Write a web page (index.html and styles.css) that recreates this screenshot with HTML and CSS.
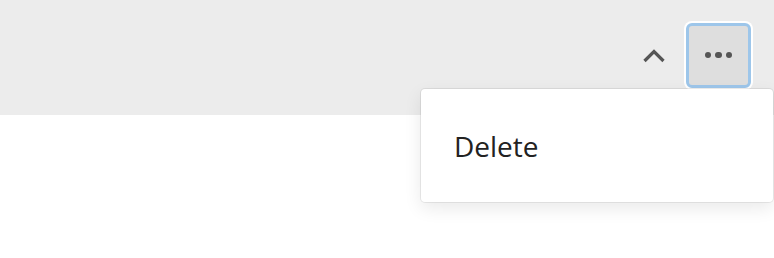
FILE: index.html
```html
<!DOCTYPE html>
<html>
<head>
<meta charset="utf-8">
<link rel="stylesheet" href="styles.css">
</head>
<body>
<div class="toolbar">
  <button class="icon-btn chevron" aria-label="Collapse">
    <svg width="24" height="16" viewBox="0 0 24 16"><path d="M2.5 13 L12 3.5 L21.5 13" fill="none" stroke="#555" stroke-width="3.2"/></svg>
  </button>
  <button class="more-btn" aria-label="More">
    <span class="dot"></span><span class="dot"></span><span class="dot"></span>
  </button>
</div>
<div class="content"></div>
<div class="menu">
  <div class="menu-item">Delete</div>
</div>
</body>
</html>
```
FILE: styles.css
```css
html, body {
  margin: 0;
  padding: 0;
  background: #ffffff;
  font-family: "Open Sans", "Noto Sans", sans-serif;
}
.toolbar {
  height: 115px;
  background: #ececec;
  display: flex;
  justify-content: flex-end;
  align-items: flex-start;
  padding: 23px 23px 0 0;
  box-sizing: border-box;
  gap: 20px;
}
.icon-btn {
  border: none;
  background: transparent;
  padding: 0;
  margin-top: 25px;
  width: 24px;
  height: 16px;
  display: flex;
}
.more-btn {
  width: 65px;
  height: 65px;
  box-sizing: border-box;
  border: 3px solid #9dc6ea;
  border-radius: 6px;
  background: #dedede;
  box-shadow: 0 0 0 2px #ffffff;
  display: flex;
  align-items: center;
  justify-content: center;
  gap: 4px;
  padding: 0 0 1px 0;
}
.dot {
  width: 6.5px;
  height: 6.5px;
  border-radius: 50%;
  background: #555555;
}
.menu {
  position: absolute;
  top: 89px;
  right: 1px;
  width: 352px;
  height: 113px;
  box-sizing: border-box;
  background: #ffffff;
  border-radius: 4px;
  box-shadow: 0 0 0 1px rgba(0,0,0,0.07), 0 6px 18px rgba(0,0,0,0.09);
  display: flex;
  align-items: center;
}
.menu-item {
  padding-left: 33px;
  font-size: 28px;
  color: #222222;
  line-height: 1;
}
```
